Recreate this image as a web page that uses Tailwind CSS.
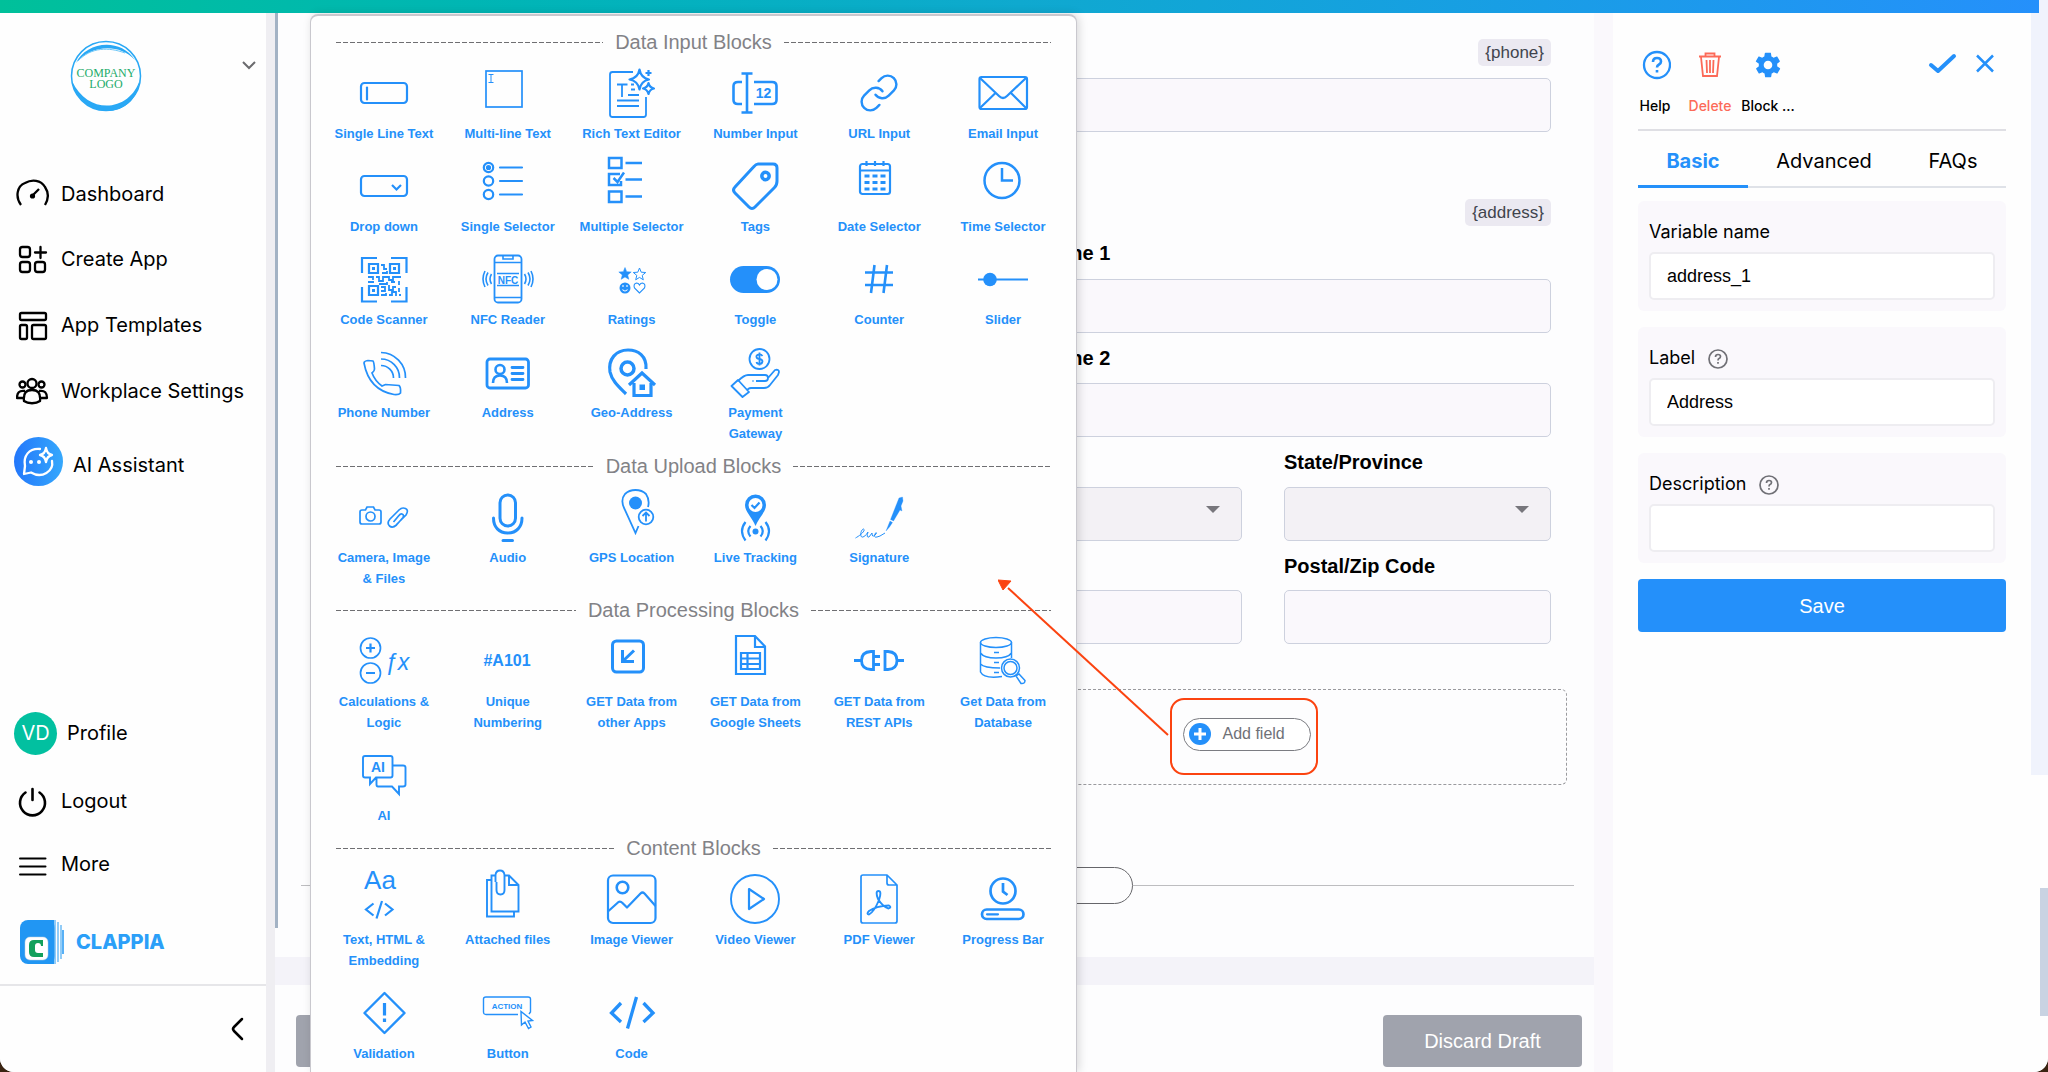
<!DOCTYPE html>
<html lang="en">
<head>
<meta charset="utf-8">
<title>Clappia - App Designer</title>
<script src="https://cdn.jsdelivr.net/npm/@tailwindcss/browser@4"></script>
</head>
<body class="bg-[#3a2412]">
<div class="flex h-screen flex-col overflow-hidden rounded-b-[14px] bg-[#f0f3fc] font-['Liberation_Sans',Arial,sans-serif] text-black">
  <div class="mr-[9px] h-[13px] shrink-0 bg-linear-to-r from-[#00c09a] via-[#0fa9cf] to-[#2590fb]"></div>
  <div class="flex min-h-0 flex-1">

    <!-- Sidebar -->
    <aside class="flex w-[275px] shrink-0 flex-col border-r-[9px] border-[#efeef2] bg-[#fefefe] font-['Inter',sans-serif] text-[20px]">
      <div class="flex h-[148px] shrink-0 items-start justify-between pt-[26px] pr-[7px] pl-[69px]">
        <svg class="size-[74px]" viewBox="0 0 74 74" fill="none">
          <circle cx="37" cy="37" r="34.500" stroke="#29a8f5" stroke-width="1.500"/>
          <path d="M7 24C16 4 50-3 66 21C50 4 22 6 7 24Z" fill="#29a8f5"/>
          <path d="M9 22C22 8 40 8 56 14" stroke="#6fc8f8" stroke-width="1"/>
          <path d="M3 42C8 78 66 86 71 40C62 72 20 78 3 42Z" fill="#29a8f5"/>
          <text x="37" y="38" text-anchor="middle" font-family="Liberation Serif, serif" font-size="12" fill="#23ab6a">COMPANY</text>
          <text x="37" y="49" text-anchor="middle" font-family="Liberation Serif, serif" font-size="12" fill="#23ab6a">LOGO</text>
        </svg>
        <button aria-label="Switch workplace" class="mt-[18px]"><svg class="h-4 w-5" viewBox="0 0 20 16" fill="none" stroke="#6b6b6e" stroke-width="2"><path d="M4 5l6 6 6-6"/></svg></button>
      </div>
      <nav class="flex flex-col">
        <a href="#" class="flex h-[65px] items-center gap-[12px] pl-[16px]">
          <svg class="size-[33px]" viewBox="0 0 33 33" fill="none" stroke="currentColor" stroke-width="2.300"><path d="M5 28C-1 20 1 9 9 6C16 2 25 3 29 10C33 16 32 23 29 28"/><circle cx="16.500" cy="19" r="2.600" fill="currentColor" stroke="none"/><path d="M16 19l7-7"/></svg>
          <span>Dashboard</span></a>
        <a href="#" class="flex h-[66px] items-center gap-[12px] pl-[16px]">
          <svg class="size-[33px]" viewBox="0 0 33 33" fill="none" stroke="currentColor" stroke-width="2.300" stroke-linecap="round"><rect x="4" y="4" width="10" height="10" rx="2.500"/><rect x="4" y="19" width="10" height="10" rx="2.500"/><rect x="19" y="19" width="10" height="10" rx="2.500"/><path d="M24.500 4v11M19 9.500h11"/></svg>
          <span>Create App</span></a>
        <a href="#" class="flex h-[66px] items-center gap-[12px] pl-[16px]">
          <svg class="size-[33px]" viewBox="0 0 33 33" fill="none" stroke="currentColor" stroke-width="2.300"><rect x="4" y="4" width="26" height="7" rx="1.500"/><rect x="4" y="16" width="7" height="14" rx="1.500"/><rect x="16" y="16" width="14" height="14" rx="1.500"/></svg>
          <span>App Templates</span></a>
        <a href="#" class="flex h-[66px] items-center gap-[12px] pl-[16px]">
          <svg class="size-[33px]" viewBox="0 0 33 33" fill="none" stroke="currentColor" stroke-width="2.300" stroke-linejoin="round"><circle cx="16" cy="8.500" r="4.500"/><circle cx="6.500" cy="9.500" r="3"/><circle cx="25.500" cy="9.500" r="3"/><path d="M8 26c-1-9 3-11 8-11s9 2 8 11c-4 3-12 3-16 0ZM9 16c-6-1-8 2-8 7h6M23 16c6-1 8 2 8 7h-6"/></svg>
          <span>Workplace Settings</span></a>
        <a href="#" class="flex h-[74px] items-center gap-[10px] pl-[14px]">
          <svg class="size-[49px]" viewBox="0 0 49 49" fill="none" stroke="#fff" stroke-width="2.300" stroke-linejoin="round" stroke-linecap="round"><defs><linearGradient id="ai"><stop stop-color="#2377fb"/><stop offset="1" stop-color="#35a8fc"/></linearGradient></defs><circle cx="24.500" cy="24.500" r="24.500" fill="url(#ai)" stroke="none"/><path d="M26 12C15 11 9 19 11 29L10 37L17 35.500C28 42 40 34 38 24"/><path d="M32 11q1 6 6 7q-5 1-6 7q-1-6-6-7q5-1 6-7Z"/><circle cx="17" cy="25" r="2" fill="#fff" stroke="none"/><circle cx="25" cy="25" r="2" fill="#fff" stroke="none"/></svg>
          <span class="pt-2">AI Assistant</span></a>
      </nav>
      <nav class="mt-auto flex flex-col">
        <a href="#" class="flex h-[80px] items-center gap-[10px] pl-[14px]"><span class="flex size-[43px] items-center justify-center rounded-full bg-[#02c0a0] text-white">VD</span><span>Profile</span></a>
        <a href="#" class="flex h-[56px] items-center gap-[12px] pl-[16px]">
          <svg class="size-[33px]" viewBox="0 0 33 33" fill="none" stroke="currentColor" stroke-width="2.600" stroke-linecap="round"><path d="M16.500 4v11M9.500 7.500a12.500 12.500 0 1 0 14 0"/></svg>
          <span>Logout</span></a>
        <a href="#" class="flex h-[70px] items-center gap-[12px] pl-[16px]">
          <svg class="size-[33px]" viewBox="0 0 33 33" fill="none" stroke="currentColor" stroke-width="2" stroke-linecap="round"><path d="M4 10.500h25.500M4 18.500h25.500M4 26.500h25.500"/></svg>
          <span>More</span></a>
        <a href="#" class="flex h-[85px] items-center gap-[12px] pl-[20px]">
          <svg class="h-[44px] w-[44px]" viewBox="0 0 44 44"><rect width="35" height="44" rx="8" fill="#2196f3"/><path d="M26 0h8v44h-8z" fill="#2196f3"/><path d="M35 0v44M38 2v40M41 5v34" stroke="#6fbcf5" stroke-width="1.500"/><path d="M43 10v24" stroke="#2196f3" stroke-width="1.500"/><rect x="5" y="17" width="23" height="23" rx="5" fill="#fff" stroke="#bcd" stroke-width=".500"/><path d="M23 26v-6h-9q-5 0-5 5v7q0 5 5 5h9v-4h-5q-3 0-3-3v-4q0-3 3-3q3 0 3 3Z" fill="#12a05c"/></svg>
          <span class="font-extrabold text-[#2b9ff8]">CLAPPIA</span></a>
        <div class="flex h-[88px] items-center justify-end border-t-2 border-[#e6e6e9] pr-[20px]">
          <button aria-label="Collapse sidebar"><svg class="h-[24px] w-[18px]" viewBox="0 0 18 24" fill="none" stroke="currentColor" stroke-width="2.500" stroke-linecap="round"><path d="M14 2L6 10q-2 2 0 4l8 8"/></svg></button>
        </div>
      </nav>
    </aside>

    <!-- Form canvas -->
    <main class="relative flex min-w-0 flex-1 flex-col bg-[#fdfdfe]">
      <div class="absolute top-0 left-0 h-[915px] w-[3px] bg-[#a3b2c4]"></div>
      <section class="flex flex-1 flex-col pr-[20px] pl-[26px]">
        <div class="mr-[7px] w-[640px] self-end pt-[26px]">
          <div class="px-4">
            <div class="flex justify-end"><span class="flex h-[27px] items-center rounded-[5px] bg-[#ebe9f1] px-[7px] text-[17px] text-[#40444d]">{phone}</span></div>
            <input aria-label="Phone" class="mt-[12px] block h-[54px] w-full rounded-[5px] border border-[#cdd1de] bg-[#faf8fc]">
            <div class="mt-[67px] flex justify-end"><span class="flex h-[27px] items-center rounded-[5px] bg-[#ebe9f1] px-[7px] text-[17px] text-[#40444d]">{address}</span></div>
            <div class="pl-8 text-[20px] font-bold">
              <label for="a1" class="-ml-2 flex h-[53px] items-center">Address Line 1</label>
              <input id="a1" class="block h-[54px] w-full rounded-[5px] border border-[#cdd1de] bg-[#faf8fc]">
              <label for="a2" class="-ml-2 flex h-[50px] items-center">Address Line 2</label>
              <input id="a2" class="block h-[54px] w-full rounded-[5px] border border-[#cdd1de] bg-[#faf8fc]">
              <div class="grid grid-cols-2 gap-x-[42px]">
                <div><label for="co" class="flex h-[50px] items-center">Country</label>
                  <div class="relative"><select id="co" class="block h-[54px] w-full appearance-none rounded-[5px] border border-[#cdd1de] bg-[#f3f1f5]"></select><svg class="absolute top-[19px] right-[22px] h-[7px] w-[14px]" viewBox="0 0 14 7"><path d="M0 0h14L7 7Z" fill="#77767c"/></svg></div></div>
                <div><label for="st" class="flex h-[50px] items-center">State/Province</label>
                  <div class="relative"><select id="st" class="block h-[54px] w-full appearance-none rounded-[5px] border border-[#cdd1de] bg-[#f3f1f5]"></select><svg class="absolute top-[19px] right-[22px] h-[7px] w-[14px]" viewBox="0 0 14 7"><path d="M0 0h14L7 7Z" fill="#77767c"/></svg></div></div>
                <div><label for="ci" class="flex h-[49px] items-center">City</label>
                  <input id="ci" class="block h-[54px] w-full rounded-[5px] border border-[#cdd1de] bg-[#faf8fc]"></div>
                <div><label for="zp" class="flex h-[49px] items-center">Postal/Zip Code</label>
                  <input id="zp" class="block h-[54px] w-full rounded-[5px] border border-[#cdd1de] bg-[#faf8fc]"></div>
              </div>
            </div>
          </div>
          <div class="mt-[45px] flex h-[96px] items-center justify-center rounded-[6px] border border-dashed border-[#9a9a9e] pr-[6px] pb-[2px]">
            <div class="relative flex h-[77px] w-[148px] items-center justify-center rounded-[14px] border-2 border-[#fb4310] pb-[4px] pl-[5px]">
              <button class="flex h-[33px] w-[128px] items-center gap-[12px] rounded-full border border-[#7b7c82] bg-white pl-[5px] text-[16px] text-[#6f7177]">
                <svg class="size-[22px] shrink-0" viewBox="0 0 22 22"><circle cx="11" cy="11" r="11" fill="#2490fa"/><path d="M11 5v12M5 11h12" stroke="#fff" stroke-width="3"/></svg>Add field</button>
              <!-- Arrow from the button to the block picker -->
              <svg class="absolute right-full bottom-[36px] z-20 mr-[2px] h-[158px] w-[172px]" viewBox="0 0 172 158"><path d="M170 156L10 9" stroke="#fb4310" stroke-width="2"/><path d="M0 1L13 2L5 11Z" fill="#fb4310" stroke="#fb4310"/></svg>
            </div>
          </div>
        </div>
        <div class="mt-[82px] flex items-center">
          <div class="h-px flex-1 bg-[#bdbdc0]"></div>
          <button aria-label="Add section" class="h-[37px] w-[390px] rounded-full border border-[#66666a]"></button>
          <div class="h-px flex-1 bg-[#bdbdc0]"></div>
        </div>
      </section>
      <div class="h-[28px] shrink-0 bg-[#f4f3f9]"></div>
      <footer class="flex h-[87px] shrink-0 items-start justify-between bg-[#fdfdfe] pt-[30px] pr-[12px] pl-[21px]">
        <button aria-label="Save Draft" class="h-[52px] w-[199px] rounded-[4px] bg-[#a0a3ad]"></button>
        <button class="h-[52px] w-[199px] rounded-[4px] bg-[#a0a3ad] text-[20px] text-white">Discard Draft</button>
      </footer>

      <!-- Block picker -->
      <div class="absolute top-[1px] bottom-0 left-[35px] z-10 w-[767px] overflow-hidden rounded-t-[8px] border-x border-t-2 border-[#c9c8ce] bg-[#fefefe] px-[11px] pt-[12px] shadow-[2px_0_10px_rgba(0,0,0,0.15)] [&_svg]:size-[50px] [&_svg]:overflow-visible [&_svg]:fill-none [&_svg]:stroke-current [&_svg]:stroke-[2.2px] [&_button]:flex [&_button]:flex-col [&_button]:items-center [&_button]:gap-[5px] [&_button]:text-[13px] [&_button]:leading-[21px] [&_button]:font-bold [&_button]:text-[#2490fa]">
        <div class="mb-3 flex h-[28px] items-center gap-[12px] px-[14px] text-[20px] text-[#828286]"><i class="h-px flex-1 bg-[repeating-linear-gradient(90deg,#6f6f72_0_5px,transparent_5px_7px)]"></i><h2>Data Input Blocks</h2><i class="h-px flex-1 bg-[repeating-linear-gradient(90deg,#6f6f72_0_5px,transparent_5px_7px)]"></i></div>
        <div class="grid grid-cols-6 gap-y-[17px]">
          <button><svg viewBox="0 0 50 50"><rect x="2" y="15" width="46" height="20" rx="3.500"/><path d="M8 19.500v12" stroke-linecap="round"/></svg>Single Line Text</button>
          <button><svg viewBox="0 0 50 50"><rect x="3" y="3" width="36" height="36" style="stroke-width:1.700"/><path d="M8 6.500v8M5.500 6.500h5M5.500 14.500h5" style="stroke-width:1"/></svg>Multi-line Text</button>
          <button><svg viewBox="0 0 50 50" stroke-linejoin="round"><path d="M26 4H5.500Q3 4 3 6.500V46.500Q3 49 5.500 49H36.500Q39 49 39 46.500V29M10 16.500h10.500M15 16.500V29M24 16.500h3M24 21.500h4M21 27h11M10 32.500h22M10 38h22" style="stroke-width:1.8"/><path d="M32.500 1.500Q34 10 42 11.500Q34 13 32.500 21.500Q31 13 22.500 11.500Q31 10 32.500 1.500ZM41.500 15Q42.500 19.500 47 20.500Q42.500 21.500 41.500 26Q40.500 21.500 36 20.500Q40.500 19.500 41.500 15ZM41.500 2v6M38.500 5h6"/></svg>Rich Text Editor</button>
          <button><svg viewBox="0 0 50 50"><path d="M12 14H8Q3.500 14 3.500 18V32Q3.500 36 8 36H12M24 14H42Q46.500 14 46.500 18V32Q46.500 36 42 36H24M17 6V44M11.500 5.500h11M11.500 44.500h11" style="stroke-width:2.600"/><text x="33.500" y="30" text-anchor="middle" font-size="14" class="fill-current stroke-none">12</text></svg>Number Input</button>
          <button><svg viewBox="0 0 50 50" stroke-linecap="round"><g transform="translate(4 4) scale(1.75)"><path style="stroke-width:1.400" d="M10 13a5 5 0 0 0 7.540.540l3-3a5 5 0 0 0-7.070-7.070l-1.720 1.710M14 11a5 5 0 0 0-7.540-.540l-3 3a5 5 0 0 0 7.070 7.070l1.710-1.710"/></g></svg>URL Input</button>
          <button><svg viewBox="0 0 50 50"><rect x="1.500" y="9" width="47.500" height="32" rx="2"/><path d="M2 10L21 28Q25 32 29 28L48 10M2 40L17.500 25M48 40L33 25"/></svg>Email Input</button>

          <button><svg viewBox="0 0 50 50"><rect x="2" y="15" width="46" height="20" rx="3.500"/><path d="M33 24l4.500 4.500L42 24"/></svg>Drop down</button>
          <button><svg viewBox="0 0 50 50" stroke-linecap="round"><circle cx="5.500" cy="6.500" r="4.700"/><circle cx="5.500" cy="6.500" r="1.500" class="fill-current"/><circle cx="5.500" cy="20" r="4.700"/><circle cx="5.500" cy="33.500" r="4.700"/><path d="M17 6.500h22M17 20h22M17 33.500h22"/></svg>Single Selector</button>
          <button><svg viewBox="0 0 50 50"><path d="M2-3h12.500V7H2ZM13 13H2V24h12v-4M6.500 17l4 4L17 11.500M2 30.500h12.500V41H2ZM18.500 2H35M18.500 18.500H35M18.500 35.500H35" style="stroke-width:2.500"/></svg>Multiple Selector</button>
          <button><svg viewBox="0 0 50 50" stroke-linejoin="round"><path d="M28 3H43Q47 3 47 7V20Q47 24 44.500 26.500L25 46Q22 49 19 46L5 32Q2 29 5 26L23.500 6Q26 3 28 3Z" style="stroke-width:3"/><circle cx="35.500" cy="15" r="3.700" style="stroke-width:3.500"/></svg>Tags</button>
          <button><svg viewBox="0 0 50 50"><rect x="6" y="3" width="30" height="30" rx="2.500"/><path d="M6 9.500h30M12.500 0v5M21 0v5M29.500 0v5"/><path d="M10.500 15h21M10.500 21.500h21M10.500 28h21" stroke-dasharray="5 3" style="stroke-width:3.200"/></svg>Date Selector</button>
          <button><svg viewBox="0 0 50 50"><circle cx="24" cy="19.500" r="17.500" style="stroke-width:2.500"/><path d="M24 7V19.500H35" style="stroke-width:2.500"/></svg>Time Selector</button>

          <button><svg viewBox="0 0 50 50"><path d="M3 19V4H18M32 4H47.500V19M47.500 33V47.500H32M18 47.500H3V33"/><path d="M10 10h9v9h-9ZM31 10h9v9h-9ZM10 32h9v9h-9Z"/><path d="M13 13h3v3h-3ZM34 13h3v3h-3ZM13 35h3v3h-3Z" class="fill-current stroke-none"/><path d="M22 11h3v4h3M23 19h5v-2M9 23h5v3M17 23h3v4h4v-4h6v3h4v-3h8M9 28h6M20 30h8v-2M32 28h4M40 27v4M22 33h4v4h-4M22 41h5v-2M30 31v5h4v-3h3M30 41h3v-3h4v4M40 34v4M40 41h2" style="stroke-width:1.800"/></svg>Code Scanner</button>
          <button><svg viewBox="0 0 50 50"><rect x="11.500" y="1.500" width="27" height="47" rx="3.500" style="stroke-width:1.800"/><path d="M12 8.500h26M12 43.500h26M14 19.500h22M14 31.500h22M20 2v3h10V2M8.500 20q-3 5 0 10M5 18.500q-4 6.500 0 13M2 17q-4 8 0 16M41.500 20q3 5 0 10M45 18.500q4 6.500 0 13M48 17q4 8 0 16" style="stroke-width:1.600"/><text x="25" y="29.500" text-anchor="middle" font-size="10" class="fill-current stroke-none">NFC</text></svg>NFC Reader</button>
          <button><svg viewBox="0 0 50 50"><path d="M18 13.500l1.700 4.200 4.500.3-3.500 2.900 1.100 4.400-3.800-2.400-3.800 2.400 1.100-4.400-3.500-2.900 4.500-.3Z" class="fill-current" style="stroke-width:.5"/><path d="M32.500 14l1.700 4.200 4.500.3-3.500 2.900 1.100 4.400-3.800-2.400-3.800 2.400 1.100-4.400-3.500-2.900 4.500-.3Z" style="stroke-width:1"/><circle cx="18" cy="34" r="5.500" class="fill-current stroke-none"/><path d="M15.500 35.500q2.500 3 5 0M16 31v2M20 31v2" style="stroke:#fff;stroke-width:1.100"/><path d="M32.500 39l-5-5q-1.500-4 2-5q2 0 3 2q1-2 3-2q3.500 1 2 5Z" style="stroke-width:1.100"/></svg>Ratings</button>
          <button><svg viewBox="0 0 50 50"><rect x="0" y="12" width="50" height="27" rx="13.500" class="fill-current stroke-none"/><circle cx="37" cy="25.500" r="10.500" class="fill-white stroke-none"/></svg>Toggle</button>
          <button><svg viewBox="0 0 50 50"><path d="M20.500 11L17 39M33 11L29.500 39M11 18.500H39M11 31H39" style="stroke-width:2.600"/></svg>Counter</button>
          <button><svg viewBox="0 0 50 50"><path d="M0 25.500H50"/><circle cx="12" cy="25.500" r="6.800" class="fill-current stroke-none"/></svg>Slider</button>

          <button><svg viewBox="0 0 50 50"><path d="M5 16Q5 14 9 13.500L14 14Q15 15 15.500 22Q15.500 24 13 26Q16 34 23 39L26.500 37.500L40 38.500Q42 40 41.500 46Q40 48 35 47.500Q10 43 5 16ZM22 5.500A25 25 0 0 1 46.500 31M22 12A18.500 18.500 0 0 1 40.500 31M22 18.500A12.500 12.500 0 0 1 34.500 31" style="stroke-width:1.700"/></svg>Phone Number</button>
          <button><svg viewBox="0 0 50 50"><rect x="4" y="12" width="41.500" height="29" rx="3" style="stroke-width:2.800"/><circle cx="17" cy="22.500" r="4.500" style="stroke-width:2.600"/><path d="M10 36Q10 28.500 17 28.500Q24 28.500 24 36" style="stroke-width:2.600"/><path d="M29 20.500h11M29 26.500h11M29 32.500h11" style="stroke-width:2.800" stroke-linecap="round"/></svg>Address</button>
          <button><svg viewBox="0 0 50 50"><path d="M39 22C40 9 31 3 21 3C9 3 1 12 3 25C5 34 12 40 19 47" style="stroke-width:3.200"/><circle cx="20.500" cy="21.500" r="6.500" style="stroke-width:3.500"/><path d="M22 38L35 26L48 38M27 36V48.500H44V36" style="stroke-width:3.200"/><rect x="32.500" y="37.500" width="5.500" height="5.500" class="fill-current stroke-none"/></svg>Geo-Address</button>
          <button><svg viewBox="0 0 50 50" stroke-linejoin="round"><circle cx="29.500" cy="12" r="10" style="stroke-width:1.800"/><path style="stroke-width:1.800" d="M32.500 9Q31 7 29 7.500Q26 8 26.500 10Q27 12 29.500 12Q32.500 12.500 32.500 14.500Q32 17 29.500 17Q27 17 26.500 15M29.500 5.500V18.500M1.500 39L8 33L19 45L12.500 50ZM8 34Q14 28 18 28H35Q38 28 38 31Q38 34 35 34H26M22.500 34h1M38 31L45 23Q49 22 49 25L48 28L40 38Q38 41 34 41H21Q18 41 17 44"/></svg>Payment<br>Gateway</button>
        </div>

        <div class="mt-2 mb-3 flex h-[28px] items-center gap-[12px] px-[14px] text-[20px] text-[#828286]"><i class="h-px flex-1 bg-[repeating-linear-gradient(90deg,#6f6f72_0_5px,transparent_5px_7px)]"></i><h2>Data Upload Blocks</h2><i class="h-px flex-1 bg-[repeating-linear-gradient(90deg,#6f6f72_0_5px,transparent_5px_7px)]"></i></div>
        <div class="grid grid-cols-6 gap-y-[17px]">
          <button><svg viewBox="0 0 50 50"><path d="M1 20Q1 18 3 18H6.500L8 15H14.500L16 18H20Q22 18 22 20V30Q22 32 20 32H3Q1 32 1 30ZM37 33L47 23Q50 18 46.500 16.500Q43 15 40 18L31 27Q27.500 31 30.500 34Q33.500 36.500 37.500 33L44 25.500Q45.500 23 43 22Q41.500 21.500 39.500 24L34.500 30" style="stroke-width:1.700"/><circle cx="11.500" cy="24.500" r="4.500" style="stroke-width:1.700"/></svg>Camera, Image<br>&amp; Files</button>
          <button><svg viewBox="0 0 50 50" stroke-linecap="round"><rect x="17" y="3" width="15.500" height="31" rx="7.700" style="stroke-width:3"/><path d="M10.500 26C10.500 35 16 41 24.700 41S39 35 39 26M20 48.500h9.500" style="stroke-width:3"/></svg>Audio</button>
          <button><svg viewBox="0 0 50 50"><path d="M31.500 34L28.500 41L17.500 17Q13 8 18 2Q22-2 28.500-2Q35-2 39 2Q43 8 41 15" style="stroke-width:1.800"/><circle cx="28.500" cy="11" r="6.500" class="fill-current stroke-none"/><circle cx="39" cy="25" r="7.300" style="stroke-width:1.800"/><path d="M39 29.500V21M35.500 24L39 20.500L42.500 24" style="stroke-width:1.800"/></svg>GPS Location</button>
          <button><svg viewBox="0 0 50 50"><path d="M25.500 34C22 25 15 20 15 13A10.500 10.500 0 0 1 36 13C36 20 29 25 25.500 34Z" class="fill-current stroke-none"/><circle cx="25.500" cy="13" r="7" class="fill-white stroke-none"/><path d="M21.500 13l3 3 5-5.500M20.500 34q-4.500 5 0 10.500M15.500 30q-7 9 0 18.500M30.500 34q4.500 5 0 10.500M35.500 30q7 9 0 18.500"/><circle cx="25.500" cy="39.500" r="3" class="fill-current stroke-none"/></svg>Live Tracking</button>
          <button><svg viewBox="0 0 50 50"><path d="M45 6L48.500 5L49 9L47 14L48 19L46 18L39.500 29L36.500 27.500ZM36 29L38.500 30.500L35.500 35L32 39Z" class="fill-current" style="stroke-width:.3"/><path d="M1.500 46C7 43 12 38 9.500 37C7 37 5 46 9 45C12 44 13 41 14 40Q12 46 15 45L18 41Q18 46 21 43Q24 40 21.500 41Q19 46 23 45Q25 45 31 41" style="stroke-width:1"/></svg>Signature</button>
        </div>

        <div class="mt-[7px] mb-3 flex h-[28px] items-center gap-[12px] px-[14px] text-[20px] text-[#828286]"><i class="h-px flex-1 bg-[repeating-linear-gradient(90deg,#6f6f72_0_5px,transparent_5px_7px)]"></i><h2>Data Processing Blocks</h2><i class="h-px flex-1 bg-[repeating-linear-gradient(90deg,#6f6f72_0_5px,transparent_5px_7px)]"></i></div>
        <div class="grid grid-cols-6 gap-y-[17px]">
          <button><svg viewBox="0 0 50 50"><circle cx="11.500" cy="12" r="10" style="stroke-width:1.700"/><circle cx="11.500" cy="37" r="10" style="stroke-width:1.700"/><path d="M7 12h9M11.500 7.500v9M7 37h9"/><text x="38" y="34" text-anchor="middle" font-size="23" font-style="italic" class="fill-current stroke-none font-normal">ƒx</text></svg>Calculations &amp;<br>Logic</button>
          <button><svg viewBox="0 0 50 50"><text x="24" y="30" text-anchor="middle" font-size="16" class="fill-current stroke-none">#A101</text></svg>Unique<br>Numbering</button>
          <button><svg viewBox="0 0 50 50"><rect x="5.500" y="5" width="31" height="31" rx="4" style="stroke-width:3"/><path d="M27 14.500L16 25M15.500 14V25.500H27" style="stroke-width:3"/></svg>GET Data from<br>other Apps</button>
          <button><svg viewBox="0 0 50 50"><path d="M6 0H25L35 10.500V38H6ZM25 0V11H35M11 17h19v16H11ZM17.500 17V33M11 22.500H30M11 28H30"/></svg>GET Data from<br>Google Sheets</button>
          <button><svg viewBox="0 0 50 50"><path d="M0 24.500H7M19.500 15.500H17Q7.500 16 7.500 24.500Q7.500 33 17 33.500H19.500ZM20 20.500h6M20 28.500h6M31 15.500H34Q43 16 43 24.500Q43 33 34 33.500H31ZM43 24.500h7" style="stroke-width:2.800"/></svg>GET Data from<br>REST APIs</button>
          <button><svg viewBox="0 0 50 50"><ellipse cx="18" cy="6.500" rx="15.500" ry="5" style="stroke-width:1.500"/><path d="M2.500 6.500V36Q6 43 24 40.500M33.500 6.500V22M2.500 17Q6 22 18 22Q30 22 33.500 17M2.500 28Q6 32 22 32M16 16.500h5M16 26.500h5M16 36.500h5" style="stroke-width:1.500"/><circle cx="32.500" cy="32" r="9" style="stroke-width:1.500"/><circle cx="32.500" cy="32" r="6.500" style="stroke-width:1.500"/><path d="M38 40L41 38L47 44.500Q47 48 43 47.500Z" style="stroke-width:1.500"/></svg>Get Data from<br>Database</button>

          <button><svg viewBox="0 0 50 50"><path d="M6 6H31.500Q33.500 6 33.500 8V25.500Q33.500 27.500 31.500 27.500H17L11 34V27.500H6Q4 27.500 4 25.500V8Q4 6 6 6ZM33.500 15.500H44Q46.500 15.500 46.500 17.500V34.500Q46.500 36.500 44 36.500H40V44L33 36.500H19Q17.500 36.500 17.500 34.500V28" style="stroke-width:1.900"/><text x="19" y="21.500" text-anchor="middle" font-size="14" class="fill-current stroke-none">AI</text></svg>AI</button>
        </div>

        <div class="mt-2 mb-3 flex h-[28px] items-center gap-[12px] px-[14px] text-[20px] text-[#828286]"><i class="h-px flex-1 bg-[repeating-linear-gradient(90deg,#6f6f72_0_5px,transparent_5px_7px)]"></i><h2>Content Blocks</h2><i class="h-px flex-1 bg-[repeating-linear-gradient(90deg,#6f6f72_0_5px,transparent_5px_7px)]"></i></div>
        <div class="grid grid-cols-6 gap-y-[17px]">
          <button><svg viewBox="0 0 50 50"><text x="21" y="15" text-anchor="middle" font-size="26" class="fill-current stroke-none font-normal">Aa</text><path d="M14.500 29.500L7 35.500L14.500 41.500M26 29.500L33.500 35.500L26 41.500M23 27L17.500 44.500"/></svg>Text, HTML &amp;<br>Embedding</button>
          <button><svg viewBox="0 0 50 50"><path d="M8 6H4V42.500H31V38M12 1.500H8.500V37.500H35.500V11L26 1.500H22M26 1.500V11H35.500M12.500 8V1Q13-3.500 17-3.500Q21-3.500 21.500 1V16Q21.500 20.500 17.500 20.500Q13.500 20.500 13.500 16V8" style="stroke-width:1.900"/></svg>Attached files</button>
          <button><svg viewBox="0 0 50 50" stroke-linejoin="round"><rect x="1" y="1.500" width="47.500" height="47.500" rx="5"/><circle cx="15.500" cy="13.500" r="5.800" style="stroke-width:2.600"/><path d="M1.500 37L11.500 28Q13.500 27 15.500 29L20 33.500L33.500 19.500Q35.500 17.500 37.500 19.500L48.500 32"/></svg>Image Viewer</button>
          <button><svg viewBox="0 0 50 50" stroke-linejoin="round"><circle cx="25" cy="25" r="24" style="stroke-width:1.900"/><path d="M19 15L34 25L19 35Z"/></svg>Video Viewer</button>
          <button><svg viewBox="0 0 50 50" stroke-linejoin="round"><path d="M33 1H9Q7 1 7 3V47Q7 49 9 49H41Q43 49 43 47V11ZM33 1V9Q33 11 35 11H43" style="stroke-width:1.700"/><path d="M24.500 17Q28 17 25 26Q20 38 15 40.500Q12 40 15 37Q22 32 35 31.500Q38 33 34.500 34.500Q29 33 24 25Q21 17 24.500 17Z" style="stroke-width:1.900"/></svg>PDF Viewer</button>
          <button><svg viewBox="0 0 50 50"><circle cx="25" cy="17" r="12.500" style="stroke-width:2.700"/><path d="M25 9V17.500L29.500 21" style="stroke-width:2.700"/><rect x="4" y="35.500" width="41.500" height="9.500" rx="4.700" style="stroke-width:2.700"/><path d="M9 40.300h11" stroke-linecap="round"/></svg>Progress Bar</button>

          <button><svg viewBox="0 0 50 50" stroke-linejoin="round"><path d="M25.500 5L45.500 25L25.500 45L5.500 25Z" style="stroke-width:2.400"/><path d="M25.500 15V27.500M25.500 30.500V34" style="stroke-width:3.200"/></svg>Validation</button>
          <button><svg viewBox="0 0 50 50"><path d="M35 26.500H3Q.5 26.500.5 24V11Q.5 9 3 9H45Q47.500 9 47.500 11V24L46 26M38 23.500L38.500 37L42 34L45.500 40.500L48 39L45 33L49.500 32.500Z" style="stroke-width:1.400"/><text x="24" y="20.500" text-anchor="middle" font-size="8" class="fill-current stroke-none">ACTION</text></svg>Button</button>
          <button><svg viewBox="0 0 50 50"><path d="M14 15L4.500 25L14 34M36.500 15L46 25L36.500 34M29.500 9L20.500 40.500" style="stroke-width:3.300"/></svg>Code</button>
        </div>
      </div>
    </main>

    <!-- Properties -->
    <aside class="w-[437px] shrink-0 border-l-[19px] border-[#faf8fc] bg-[#fefefe] px-[25px] font-['Inter',sans-serif]">
      <div class="flex h-[118px] items-start justify-between border-b-2 border-[#dfdfe4] pt-[36px]">
        <div class="flex gap-[16px] text-[14px] font-medium">
          <button class="flex w-[34px] flex-col items-center gap-[14px]"><svg class="size-[32px]" viewBox="0 0 32 32" fill="none" stroke="#2490fa" stroke-width="2.300"><circle cx="18" cy="16" r="13"/><path d="M14 13q0-4 4-4q4 0 4 3.500q0 2-2 3q-2 1-2 3M18 21v2.500" stroke-width="2.600"/></svg>Help</button>
          <button class="flex w-[44px] flex-col items-center gap-[14px] text-[#fc6a58]"><svg class="h-[32px] w-[24px]" viewBox="0 0 24 32" fill="none" stroke="currentColor" stroke-width="1.800"><path d="M1 7.500h22M7.500 7V4.500h9V7M3 8l2 19h14l2-19M8.500 11l.5 13M12 11v13M15.500 11l-.5 13"/></svg>Delete</button>
          <button class="-ml-2 flex w-[56px] flex-col items-center gap-[14px]"><svg class="size-[32px]" viewBox="-1 -1 26 26" fill="#2490fa"><path fill-rule="evenodd" d="M19.400 13c0-.3.100-.6.100-1s0-.7-.100-1l2.100-1.600c.2-.2.200-.4.100-.6l-2-3.500c-.1-.2-.4-.3-.6-.2l-2.500 1c-.5-.4-1.100-.7-1.700-1l-.4-2.600c0-.3-.2-.4-.5-.4h-4c-.2 0-.4.200-.5.400l-.4 2.600c-.6.300-1.200.6-1.700 1l-2.500-1c-.2-.1-.5 0-.6.200l-2 3.500c-.1.200-.1.500.1.600L4.600 11c0 .300-.1.700-.1 1s0 .7.100 1l-2.100 1.600c-.2.200-.2.400-.1.600l2 3.500c.1.200.400.300.6.200l2.500-1c.5.400 1.100.7 1.700 1l.4 2.600c0 .3.200.4.500.4h4c.2 0 .400-.2.500-.4l.4-2.600c.6-.3 1.200-.6 1.700-1l2.500 1c.2.100.5 0 .6-.2l2-3.500c.1-.2.100-.5-.1-.6ZM12 15.500a3.500 3.500 0 1 1 0-7 3.500 3.500 0 0 1 0 7Z"/></svg>Block ...</button>
        </div>
        <div class="flex items-center gap-[18px] pr-[11px]">
          <button aria-label="Apply"><svg class="size-[30px]" viewBox="0 0 30 30" fill="none" stroke="#2490fa" stroke-width="4" stroke-linecap="round" stroke-linejoin="round"><path d="M4 16l7 6L27 7"/></svg></button>
          <button aria-label="Close"><svg class="h-[30px] w-[20px]" viewBox="0 0 20 30" fill="none" stroke="#2490fa" stroke-width="2.500"><path d="M2 6.500l16 16M18 6.500l-16 16"/></svg></button>
        </div>
      </div>
      <div class="flex h-[57px] border-b-2 border-[#dfe2e8] text-[20px]">
        <button class="-mb-[2px] w-[110px] border-b-[3px] border-[#2490fa] pt-[6px] font-bold text-[#2490fa]">Basic</button>
        <button class="w-[152px] pt-[5px]">Advanced</button>
        <button class="flex-1 pt-[5px]">FAQs</button>
      </div>
      <form class="flex flex-col gap-[16px] pt-[13px]">
        <div class="h-[110px] rounded-[6px] bg-[#faf8fc] px-[11px] pt-[16px]">
          <label for="vn" class="flex h-[28px] items-center text-[18px]">Variable name</label>
          <input id="vn" value="address_1" class="mt-[7px] h-[48px] w-full rounded-[5px] border-2 border-[#eeedf1] bg-white px-[16px] font-['Liberation_Sans',sans-serif] text-[18px]">
        </div>
        <div class="h-[110px] rounded-[6px] bg-[#faf8fc] px-[11px] pt-[16px]">
          <label for="lb" class="flex h-[28px] items-center gap-[13px] text-[18px]">Label <svg class="mt-1 size-[20px]" viewBox="0 0 20 20" fill="none" stroke="#707076" stroke-width="1.700"><circle cx="10" cy="10" r="9"/><path d="M7.500 8q0-2.500 2.500-2.500t2.500 2q0 1.500-1.500 2q-1 .5-1 2M10 13v1.800"/></svg></label>
          <input id="lb" value="Address" class="mt-[7px] h-[48px] w-full rounded-[5px] border-2 border-[#eeedf1] bg-white px-[16px] font-['Liberation_Sans',sans-serif] text-[18px]">
        </div>
        <div class="h-[110px] rounded-[6px] bg-[#faf8fc] px-[11px] pt-[16px]">
          <label for="ds" class="flex h-[28px] items-center gap-[13px] text-[18px]">Description <svg class="mt-1 size-[20px]" viewBox="0 0 20 20" fill="none" stroke="#707076" stroke-width="1.700"><circle cx="10" cy="10" r="9"/><path d="M7.500 8q0-2.500 2.500-2.500t2.500 2q0 1.500-1.500 2q-1 .5-1 2M10 13v1.800"/></svg></label>
          <input id="ds" class="mt-[7px] h-[48px] w-full rounded-[5px] border-2 border-[#eeedf1] bg-white px-[16px] font-['Liberation_Sans',sans-serif] text-[18px]">
        </div>
        <button type="button" class="h-[53px] rounded-[4px] bg-[#2490fa] font-['Liberation_Sans',sans-serif] text-[20px] text-white">Save</button>
      </form>
    </aside>
    <!-- Window scroll gutter -->
    <div class="relative w-[17px] shrink-0">
      <div class="absolute inset-x-0 top-[762px] bottom-0 bg-[#fefefe]"></div>
      <div class="absolute top-[875px] right-0 h-[128px] w-[8px] bg-[#c9d3e2]"></div>
    </div>
  </div>
</div>
</body>
</html>
